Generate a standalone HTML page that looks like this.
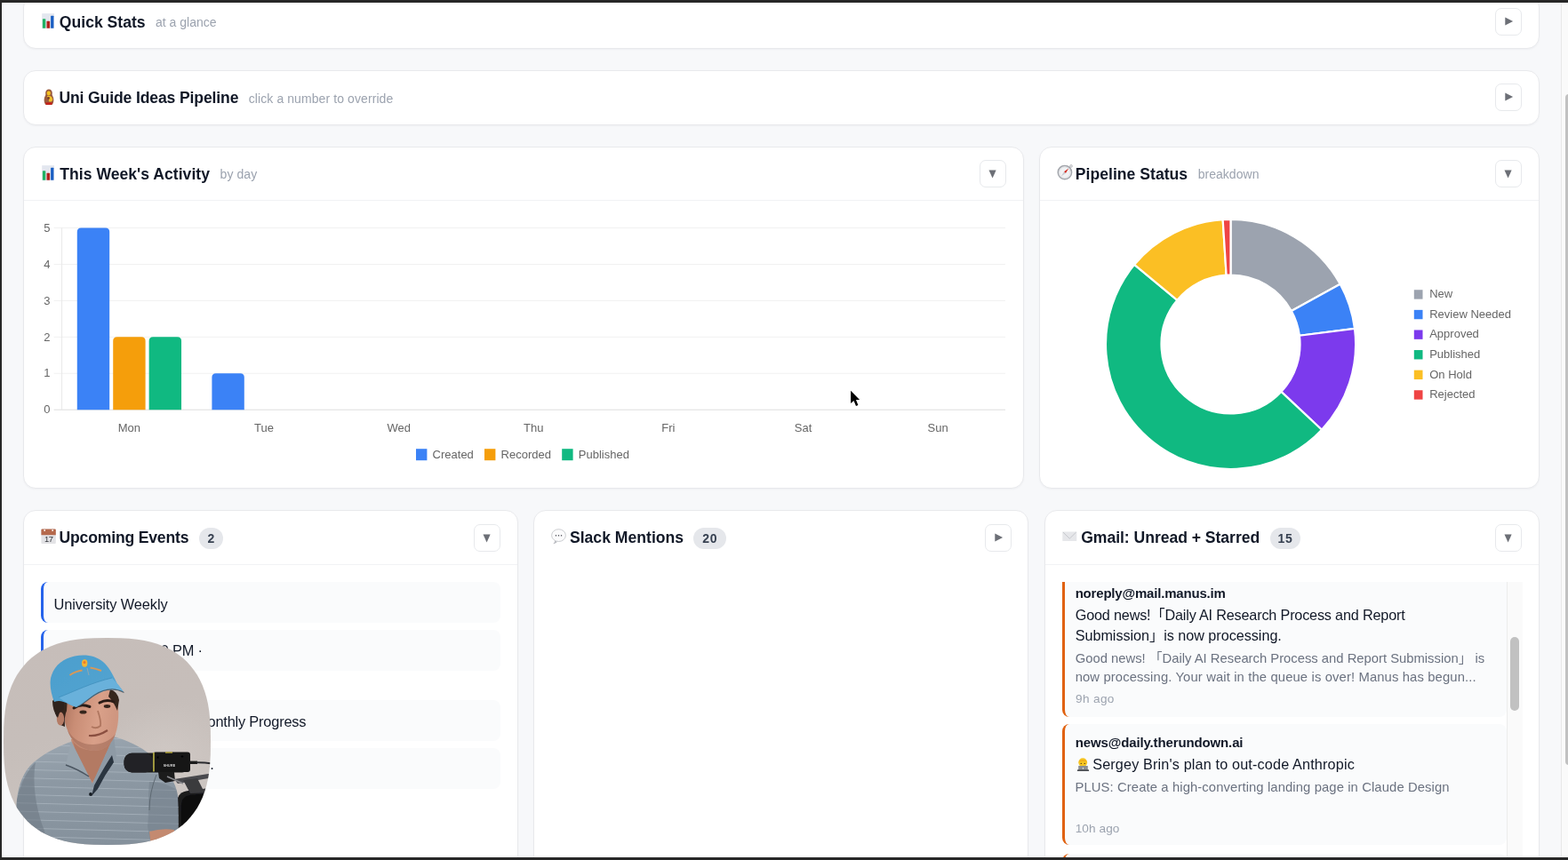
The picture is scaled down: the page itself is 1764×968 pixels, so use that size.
<!DOCTYPE html>
<html lang="en">
<head>
<meta charset="utf-8">
<title>Dashboard</title>
<style>
*{box-sizing:border-box}
html,body{margin:0;padding:0}
body{width:1764px;height:968px;overflow:hidden;position:relative;background:#f7f8fa;font-family:"Liberation Sans","Noto Sans CJK JP",sans-serif;color:#111827}
#app{position:absolute;left:0;top:0;width:1764px;height:968px;overflow:hidden;will-change:transform}
.frame-t,.frame-l,.frame-b{position:absolute;background:#272727;z-index:50}
.frame-t{left:0;top:0;width:1764px;height:3px}
.frame-l{left:0;top:0;width:2px;height:968px}
.frame-b{left:0;top:965px;width:1764px;height:3px}
.card{position:absolute;background:#fff;border:1px solid #e8e9ec;border-radius:14px;box-shadow:0 1px 2px rgba(16,24,40,.04)}
.hr{position:absolute;height:1px;background:#f1f2f5}
.btn{position:absolute;width:30px;height:31px;border:1px solid #e7e9ec;border-radius:7px;background:#fff}
.btn i{position:absolute;font-style:normal;font-family:"DejaVu Sans",sans-serif;color:#6c6f76;line-height:1;white-space:nowrap}
.btn .r{left:10.2px;top:8.3px;font-size:11.5px}
.btn .d{left:9.3px;top:8.7px;font-size:11.8px;transform:scaleX(0.9);transform-origin:50% 0}
.t{position:absolute;white-space:nowrap;line-height:1;display:block;margin:0;padding:0;font-weight:400}
.badge{position:absolute;background:#e5e7eb;border-radius:12.2px;height:24.3px}
.ev{position:absolute;width:517px;height:46px;background:#fafbfc;border-left:3px solid #2563eb;border-radius:8px}
.mailwrap{position:absolute;width:518px;height:313px;overflow:hidden}
.mail{position:absolute;left:0;width:500px;background:#fafbfc;border-left:3.5px solid #e0610f;border-radius:8px}
.strack{position:absolute;background:#fafafa}
.sthumb{position:absolute;background:#c1c1c1}
.ico{position:absolute;display:block}
svg text{font-family:"Liberation Sans",sans-serif}
</style>
</head>
<body>
<div id="app">
<div class="frame-t"></div><div class="frame-l"></div><div class="frame-b"></div>
<section class="card quick-stats" style="left:26px;top:-6px;width:1706px;height:61px">
<svg class="ico" style="left:20px;top:20.4px" width="15" height="18" viewBox="0 0 15 18"><rect x="0.2" y="0.2" width="13.8" height="17" fill="#e3e7ef"/><rect x="0.9" y="6.2" width="3.4" height="10.6" rx="0.6" fill="#1fb264"/><rect x="5.5" y="8.8" width="3.6" height="8" rx="0.6" fill="#b3221f"/><rect x="10.1" y="2.7" width="3.3" height="14.1" rx="0.5" fill="#1a5fc4"/></svg>
<h2 class="t" style="left:39.85px;top:21.50px;font-size:17.6px;font-weight:700;letter-spacing:-0.01px;color:#111827">Quick Stats</h2>
<span class="t" style="left:147.94px;top:23.00px;font-size:14px;letter-spacing:0.02px;color:#9ca3af">at a glance</span>
<div class="btn" style="left:1655px;top:14px"><i class="r">&#9654;</i></div>
</section>
<section class="card ideas-pipeline" style="left:26px;top:79px;width:1706px;height:62px">
<svg class="ico" style="left:21.7px;top:20px" width="12" height="19" viewBox="0 0 12 19"><path d="M6 0.4C3.6 0.4 2.2 2.2 2.2 4.4C2.2 5.8 2.6 6.6 1.9 7.8C1 9.3 0.6 10.8 0.6 12.4C0.6 15.2 1.6 17.2 2.6 18H9.4C10.4 17.2 11.4 15.2 11.4 12.4C11.4 10.8 11 9.3 10.1 7.8C9.4 6.6 9.8 5.8 9.8 4.4C9.8 2.2 8.4 0.4 6 0.4Z" fill="#9a5b3e"/><rect x="3.8" y="2.6" width="4" height="4.6" rx="1.6" fill="#f4c21f"/><path d="M4 8.2C6.5 7 9.8 8.6 10.2 11.5C10.4 13.4 9 14.8 6.4 14.6C5.2 13 6.6 11.4 5.6 10.4C5 9.8 4 9.2 4 8.2Z" fill="#f0bf2a"/><circle cx="5.6" cy="10.4" r="1.3" fill="#7a3b22"/><path d="M2.1 15.2H9.9C9.7 16.6 9.2 17.6 8.8 18H3.2C2.8 17.6 2.3 16.6 2.1 15.2Z" fill="#c3231c"/></svg>
<h2 class="t" style="left:39.42px;top:22.20px;font-size:17.6px;font-weight:700;letter-spacing:-0.14px;color:#111827">Uni Guide Ideas Pipeline</h2>
<span class="t" style="left:252.74px;top:23.90px;font-size:14px;letter-spacing:0.09px;color:#9ca3af">click a number to override</span>
<div class="btn" style="left:1655px;top:14px"><i class="r">&#9654;</i></div>
</section>
<section class="card week-activity" style="left:26px;top:165px;width:1126px;height:385px">
<svg class="ico" style="left:20px;top:20px" width="15" height="18" viewBox="0 0 15 18"><rect x="0.2" y="0.2" width="13.8" height="17" fill="#e3e7ef"/><rect x="0.9" y="6.2" width="3.4" height="10.6" rx="0.6" fill="#1fb264"/><rect x="5.5" y="8.8" width="3.6" height="8" rx="0.6" fill="#b3221f"/><rect x="10.1" y="2.7" width="3.3" height="14.1" rx="0.5" fill="#1a5fc4"/></svg>
<h2 class="t" style="left:40.31px;top:21.70px;font-size:17.6px;font-weight:700;letter-spacing:0.01px;color:#111827">This Week's Activity</h2>
<span class="t" style="left:220.59px;top:23.00px;font-size:14px;letter-spacing:0.08px;color:#9ca3af">by day</span>
<div class="btn" style="left:1075px;top:14px"><i class="d">&#9660;</i></div>
<div class="hr" style="left:0px;top:59px;width:1124px"></div>
<svg class="ico" style="left:0px;top:60px" width="1124" height="323" viewBox="27 226 1124 323"><rect x="60.6" y="460.70" width="1070.4" height="1" fill="#dddddd"/><rect x="60.6" y="419.76" width="1070.4" height="1" fill="#f1f1f1"/><rect x="60.6" y="378.82" width="1070.4" height="1" fill="#f1f1f1"/><rect x="60.6" y="337.88" width="1070.4" height="1" fill="#f1f1f1"/><rect x="60.6" y="296.94" width="1070.4" height="1" fill="#f1f1f1"/><rect x="60.6" y="256.00" width="1070.4" height="1" fill="#f1f1f1"/><rect x="69.10" y="256.50" width="1" height="204.70" fill="#e8e8e8"/><path d="M86.78 461.20V261.00Q86.78 256.50 91.28 256.50H118.68Q123.18 256.50 123.18 261.00V461.20Z" fill="#3b82f6"/><path d="M127.22 461.20V383.82Q127.22 379.32 131.72 379.32H159.11Q163.61 379.32 163.61 383.82V461.20Z" fill="#f59e0b"/><path d="M167.65 461.20V383.82Q167.65 379.32 172.15 379.32H199.54Q204.04 379.32 204.04 383.82V461.20Z" fill="#10b981"/><path d="M238.41 461.20V424.76Q238.41 420.26 242.91 420.26H270.30Q274.80 420.26 274.80 424.76V461.20Z" fill="#3b82f6"/><text x="56.6" y="465.40" font-size="13" fill="#666" text-anchor="end">0</text><text x="56.6" y="424.46" font-size="13" fill="#666" text-anchor="end">1</text><text x="56.6" y="383.52" font-size="13" fill="#666" text-anchor="end">2</text><text x="56.6" y="342.58" font-size="13" fill="#666" text-anchor="end">3</text><text x="56.6" y="301.64" font-size="13" fill="#666" text-anchor="end">4</text><text x="56.6" y="260.70" font-size="13" fill="#666" text-anchor="end">5</text><text x="145.41" y="486.3" font-size="13" fill="#666" text-anchor="middle">Mon</text><text x="297.04" y="486.3" font-size="13" fill="#666" text-anchor="middle">Tue</text><text x="448.67" y="486.3" font-size="13" fill="#666" text-anchor="middle">Wed</text><text x="600.30" y="486.3" font-size="13" fill="#666" text-anchor="middle">Thu</text><text x="751.93" y="486.3" font-size="13" fill="#666" text-anchor="middle">Fri</text><text x="903.56" y="486.3" font-size="13" fill="#666" text-anchor="middle">Sat</text><text x="1055.19" y="486.3" font-size="13" fill="#666" text-anchor="middle">Sun</text><rect x="468.0" y="505.2" width="12.4" height="13" fill="#3b82f6"/><text x="486.6" y="516.1" font-size="13" fill="#666">Created</text><rect x="545.0" y="505.2" width="12.4" height="13" fill="#f59e0b"/><text x="563.6" y="516.1" font-size="13" fill="#666">Recorded</text><rect x="632.2" y="505.2" width="12.4" height="13" fill="#10b981"/><text x="650.8" y="516.1" font-size="13" fill="#666">Published</text></svg>
</section>
<section class="card pipeline-status" style="left:1169px;top:165px;width:563px;height:385px">
<svg class="ico" style="left:18.6px;top:18.4px" width="19" height="19" viewBox="0 0 19 19"><circle cx="16" cy="2.9" r="1.5" fill="#d9dadd" stroke="#b4b6bb" stroke-width="0.6"/><circle cx="8.9" cy="10.1" r="7.7" fill="#f1f2f4" stroke="#a3a6ac" stroke-width="1.5"/><circle cx="8.9" cy="10.1" r="6.2" fill="none" stroke="#d5d7db" stroke-width="0.7"/><path d="M13.2 5.6L9.9 11L8 9.2Z" fill="#d2281e"/><path d="M4.8 14.6L8 9.2L9.9 11Z" fill="#c9cbd0"/></svg>
<h2 class="t" style="left:39.75px;top:21.70px;font-size:17.6px;font-weight:700;letter-spacing:0.02px;color:#111827">Pipeline Status</h2>
<span class="t" style="left:177.69px;top:23.00px;font-size:14px;letter-spacing:0.03px;color:#9ca3af">breakdown</span>
<div class="btn" style="left:512px;top:14px"><i class="d">&#9660;</i></div>
<div class="hr" style="left:0px;top:59px;width:561px"></div>
<svg class="ico" style="left:-1px;top:60px" width="563" height="322" viewBox="1169 226 563 322"><path d="M1384.50 246.90A140.6 140.6 0 0 1 1507.71 319.77L1452.85 349.92A78.0 78.0 0 0 0 1384.50 309.50Z" fill="#9ca3af" stroke="#fff" stroke-width="2.2" stroke-linejoin="round"/><path d="M1507.71 319.77A140.6 140.6 0 0 1 1523.99 369.88L1461.88 377.72A78.0 78.0 0 0 0 1452.85 349.92Z" fill="#3b82f6" stroke="#fff" stroke-width="2.2" stroke-linejoin="round"/><path d="M1523.99 369.88A140.6 140.6 0 0 1 1486.99 483.75L1441.36 440.89A78.0 78.0 0 0 0 1461.88 377.72Z" fill="#7c3aed" stroke="#fff" stroke-width="2.2" stroke-linejoin="round"/><path d="M1486.99 483.75A140.6 140.6 0 0 1 1276.17 297.88L1324.40 337.78A78.0 78.0 0 0 0 1441.36 440.89Z" fill="#10b981" stroke="#fff" stroke-width="2.2" stroke-linejoin="round"/><path d="M1276.17 297.88A140.6 140.6 0 0 1 1375.67 247.18L1379.60 309.65A78.0 78.0 0 0 0 1324.40 337.78Z" fill="#fbbf24" stroke="#fff" stroke-width="2.2" stroke-linejoin="round"/><path d="M1375.67 247.18A140.6 140.6 0 0 1 1384.50 246.90L1384.50 309.50A78.0 78.0 0 0 0 1379.60 309.65Z" fill="#ef4444" stroke="#fff" stroke-width="2.2" stroke-linejoin="round"/><rect x="1590.8" y="326.25" width="9.7" height="10.4" fill="#9ca3af"/><text x="1608.2" y="335.25" font-size="13" fill="#666">New</text><rect x="1590.8" y="348.85" width="9.7" height="10.4" fill="#3b82f6"/><text x="1608.2" y="357.85" font-size="13" fill="#666">Review Needed</text><rect x="1590.8" y="371.45" width="9.7" height="10.4" fill="#7c3aed"/><text x="1608.2" y="380.45" font-size="13" fill="#666">Approved</text><rect x="1590.8" y="394.05" width="9.7" height="10.4" fill="#10b981"/><text x="1608.2" y="403.05" font-size="13" fill="#666">Published</text><rect x="1590.8" y="416.65" width="9.7" height="10.4" fill="#fbbf24"/><text x="1608.2" y="425.65" font-size="13" fill="#666">On Hold</text><rect x="1590.8" y="439.25" width="9.7" height="10.4" fill="#ef4444"/><text x="1608.2" y="448.25" font-size="13" fill="#666">Rejected</text></svg>
</section>
<section class="card upcoming-events" style="left:26px;top:574px;width:557px;height:420px">
<svg class="ico" style="left:18.5px;top:20px" width="18" height="18" viewBox="0 0 18 18"><rect x="0.4" y="0.4" width="16.4" height="16.6" rx="1" fill="#e3e3e6"/><path d="M0.4 1.4Q0.4 0.4 1.4 0.4H15.8Q16.8 0.4 16.8 1.4V7.2H0.4Z" fill="#b5694c"/><rect x="3.4" y="1" width="1.6" height="2" fill="#f2e4dc"/><rect x="12.4" y="1" width="1.6" height="2" fill="#f2e4dc"/><text x="8.7" y="15.4" font-size="9.4" text-anchor="middle" fill="#33363c" letter-spacing="-0.4">17</text></svg>
<h2 class="t" style="left:39.52px;top:22.00px;font-size:17.6px;font-weight:700;letter-spacing:-0.19px;color:#111827">Upcoming Events</h2>
<span class="badge" style="left:197px;top:18.8px;width:27.3px"></span>
<strong class="t" style="left:206.49px;top:23.85px;font-size:14px;font-weight:700;color:#374151">2</strong>
<div class="btn" style="left:506px;top:15px"><i class="d">&#9660;</i></div>
<div class="hr" style="left:0px;top:60px;width:555px"></div>
<div class="ev" style="left:19px;top:80px"></div>
<div class="ev" style="left:19px;top:134px"></div>
<div class="ev" style="left:19px;top:213px"></div>
<div class="ev" style="left:19px;top:267px"></div>
<p class="t" style="left:33.47px;top:96.80px;font-size:16.4px;letter-spacing:-0.11px;color:#111827">University Weekly</p>
<p class="t" style="left:84.42px;top:148.80px;font-size:16.4px;letter-spacing:-0.20px;color:#111827">Today 3:00 PM ·</p>
<p class="t" style="left:117.58px;top:228.70px;font-size:16.4px;letter-spacing:-0.20px;color:#111827">Uni Guide Monthly Progress</p>
<p class="t" style="left:32.26px;top:277.00px;font-size:16.4px;letter-spacing:-0.20px;color:#111827">Today 5:30 PM · Room 4.</p>
</section>
<section class="card slack-mentions" style="left:600px;top:574px;width:557px;height:420px">
<svg class="ico" style="left:18px;top:20px" width="19" height="19" viewBox="0 0 19 19"><path d="M3.2 17.2C4.6 16.2 5.2 15 5 13.6L8 14.8C6.6 16.2 5 17 3.2 17.2Z" fill="#b9bbc0"/><ellipse cx="9.5" cy="7.6" rx="7.9" ry="6.9" fill="#fbfbfc" stroke="#c5c7cb" stroke-width="0.9"/><rect x="5.8" y="6.9" width="1.3" height="1.7" rx="0.4" fill="#5b5d63"/><rect x="8.85" y="6.9" width="1.3" height="1.7" rx="0.4" fill="#5b5d63"/><rect x="11.9" y="6.9" width="1.3" height="1.7" rx="0.4" fill="#5b5d63"/></svg>
<h2 class="t" style="left:39.92px;top:22.00px;font-size:17.6px;font-weight:700;letter-spacing:0.01px;color:#111827">Slack Mentions</h2>
<span class="badge" style="left:179.4px;top:18.8px;width:36.3px"></span>
<strong class="t" style="left:189.29px;top:23.85px;font-size:14px;font-weight:700;letter-spacing:0.71px;color:#374151">20</strong>
<div class="btn" style="left:507px;top:15px"><i class="r">&#9654;</i></div>
</section>
<section class="card gmail" style="left:1175px;top:574px;width:557px;height:420px">
<svg class="ico" style="left:19px;top:23.3px" width="17" height="12" viewBox="0 0 17 12"><rect x="0.3" y="0.6" width="16" height="10.4" rx="0.6" fill="#e6e7ea"/><path d="M0.9 1L8.3 8.2L15.7 1" fill="none" stroke="#c2c4c9" stroke-width="0.9"/></svg>
<h2 class="t" style="left:40.17px;top:22.00px;font-size:17.6px;font-weight:700;letter-spacing:-0.04px;color:#111827">Gmail: Unread + Starred</h2>
<span class="badge" style="left:253px;top:18.8px;width:33.8px"></span>
<strong class="t" style="left:261.52px;top:23.85px;font-size:14px;font-weight:700;letter-spacing:0.68px;color:#374151">15</strong>
<div class="btn" style="left:506px;top:15px"><i class="d">&#9660;</i></div>
<div class="hr" style="left:0px;top:60px;width:555px"></div>
<div class="mailwrap" style="left:19px;top:80px">
<article class="mail" style="top:-7.5px;height:159.5px"></article>
<article class="mail" style="top:160.3px;height:136px"></article>
<article class="mail" style="top:305.8px;height:136px"></article>
<strong class="t" style="left:14.65px;top:5.20px;font-size:15px;font-weight:700;letter-spacing:-0.19px;color:#111827">noreply@mail.manus.im</strong>
<p class="t" style="left:14.72px;top:29.00px;font-size:16.2px;letter-spacing:-0.17px;color:#111827">Good news!「Daily AI Research Process and Report</p>
<p class="t" style="left:14.68px;top:52.40px;font-size:16.2px;letter-spacing:-0.03px;color:#111827">Submission」is now processing.</p>
<p class="t" style="left:14.70px;top:78.70px;font-size:14.8px;color:#6b7280">Good news! 「Daily AI Research Process and Report Submission」 is</p>
<p class="t" style="left:14.64px;top:100.00px;font-size:14.8px;letter-spacing:0.13px;color:#6b7280">now processing. Your wait in the queue is over! Manus has begun...</p>
<span class="t" style="left:15.08px;top:125.40px;font-size:13.6px;letter-spacing:0.34px;color:#9ca3af">9h ago</span>
<strong class="t" style="left:14.65px;top:173.30px;font-size:15px;font-weight:700;letter-spacing:-0.13px;color:#111827">news@daily.therundown.ai</strong>
<svg class="ico" style="left:16px;top:197.9px" width="15" height="16" viewBox="0 0 15 16"><circle cx="7.2" cy="5.2" r="4.9" fill="#f6c623"/><path d="M2.6 4.4C3.6 1.6 10.8 1.6 11.8 4.4C10 3.4 4.4 3.4 2.6 4.4Z" fill="#f0a818"/><circle cx="5.3" cy="6.4" r="0.7" fill="#5b3a1c"/><circle cx="9.3" cy="6.4" r="0.7" fill="#5b3a1c"/><rect x="2.2" y="9" width="10.6" height="5" fill="#8b8e93"/><rect x="6.9" y="11" width="1.1" height="1.6" fill="#e6e7ea"/><path d="M1.2 13.2H13.8L14.2 14.9H0.8Z" fill="#4d5055"/></svg>
<p class="t" style="left:34.18px;top:197.30px;font-size:16.2px;letter-spacing:0.16px;color:#111827">Sergey Brin's plan to out-code Anthropic</p>
<p class="t" style="left:14.51px;top:223.60px;font-size:14.8px;letter-spacing:0.11px;color:#6b7280">PLUS: Create a high-converting landing page in Claude Design</p>
<span class="t" style="left:14.64px;top:270.70px;font-size:13.6px;letter-spacing:0.11px;color:#9ca3af">10h ago</span>
<div class="strack" style="left:500px;top:0;width:18px;height:313px;border-left:1px solid #ececec"></div>
<div class="sthumb" style="left:504.3px;top:62.2px;width:9.6px;height:82.4px;border-radius:5px"></div>
</div>
</section>
<div class="strack" style="left:1756px;top:3px;width:8px;height:962px;border-left:1px solid #e8e8e8"></div>
<div class="sthumb" style="left:1761px;top:105.5px;width:8px;height:755px;border-radius:4px"></div>
<svg class="ico cursor" style="left:950px;top:434px;z-index:30" width="24" height="28" viewBox="950 434 24 28"><path d="M957.1 439.7V454L960.5 450.9L963 457L965.4 456L963 450H967.1Z" fill="#000" stroke="#fff" stroke-width="1.8" stroke-linejoin="round" paint-order="stroke"/></svg>
<div class="cam" style="position:absolute;left:4px;top:718px;width:233px;height:233px;z-index:20"><svg width="233" height="233" viewBox="4 718 233 233" style="display:block"><defs><clipPath id="sq"><path d="M237.0 834.5L236.8 849.4L236.2 859.6L235.3 868.4L234.0 876.5L232.3 884.0L230.2 890.9L227.8 897.4L225.0 903.5L221.9 909.3L218.3 914.6L214.4 919.6L210.2 924.2L205.6 928.4L200.6 932.3L195.3 935.9L189.5 939.0L183.4 941.8L176.9 944.2L170.0 946.3L162.5 948.0L154.4 949.3L145.6 950.2L135.4 950.8L120.5 951.0L105.6 950.8L95.4 950.2L86.6 949.3L78.5 948.0L71.0 946.3L64.1 944.2L57.6 941.8L51.5 939.0L45.7 935.9L40.4 932.3L35.4 928.4L30.8 924.2L26.6 919.6L22.7 914.6L19.1 909.3L16.0 903.5L13.2 897.4L10.8 890.9L8.7 884.0L7.0 876.5L5.7 868.4L4.8 859.6L4.2 849.4L4.0 834.5L4.2 819.6L4.8 809.4L5.7 800.6L7.0 792.5L8.7 785.0L10.8 778.1L13.2 771.6L16.0 765.5L19.1 759.7L22.7 754.4L26.6 749.4L30.8 744.8L35.4 740.6L40.4 736.7L45.7 733.1L51.5 730.0L57.6 727.2L64.1 724.8L71.0 722.7L78.5 721.0L86.6 719.7L95.4 718.8L105.6 718.2L120.5 718.0L135.4 718.2L145.6 718.8L154.4 719.7L162.5 721.0L170.0 722.7L176.9 724.8L183.4 727.2L189.5 730.0L195.3 733.1L200.6 736.7L205.6 740.6L210.2 744.8L214.4 749.4L218.3 754.4L221.9 759.7L225.0 765.5L227.8 771.6L230.2 778.1L232.3 785.0L234.0 792.5L235.3 800.6L236.2 809.4L236.8 819.6Z"/></clipPath><linearGradient id="wall" x1="0" y1="0" x2="0.3" y2="1"><stop offset="0" stop-color="#c6bdb9"/><stop offset="0.5" stop-color="#c6beba"/><stop offset="1" stop-color="#cbc4c0"/></linearGradient><radialGradient id="wallglow" cx="0.78" cy="0.6" r="0.3"><stop offset="0" stop-color="#d2cbc7" stop-opacity="0.8"/><stop offset="1" stop-color="#d0c9c5" stop-opacity="0"/></radialGradient><linearGradient id="skin" x1="0" y1="0" x2="1" y2="0.2"><stop offset="0" stop-color="#a8705b"/><stop offset="0.3" stop-color="#c98d75"/><stop offset="0.7" stop-color="#d9a089"/><stop offset="1" stop-color="#cf9680"/></linearGradient><linearGradient id="shirt" x1="0.3" y1="0" x2="0.5" y2="1"><stop offset="0" stop-color="#9ba6b0"/><stop offset="0.4" stop-color="#8c98a3"/><stop offset="1" stop-color="#85919c"/></linearGradient><linearGradient id="cap" x1="0" y1="0" x2="1" y2="1"><stop offset="0" stop-color="#4b9ecd"/><stop offset="1" stop-color="#55a5d1"/></linearGradient><pattern id="stripes" width="40" height="9.4" patternUnits="userSpaceOnUse" patternTransform="rotate(1.5)"><rect x="0" y="0" width="40" height="1" fill="#b3bdc6" opacity="0.6"/></pattern><clipPath id="shirtclip"><path d="M80 835C70 838 52 846 38 858C26 868 21 884 19 900C17 915 20 935 30 951H200C201 935 201 915 200 896C198 880 188 866 170 850C158 840 142 833 128 829L104 882Z"/></clipPath><filter id="soft" x="-5%" y="-5%" width="110%" height="110%"><feGaussianBlur stdDeviation="0.55"/></filter></defs><g clip-path="url(#sq)"><rect x="4" y="718" width="233" height="233" fill="url(#wall)"/><rect x="4" y="718" width="233" height="233" fill="url(#wallglow)"/><g filter="url(#soft)"><path d="M198 953L199 903Q200 891 212 890L240 888V953Z" fill="#1a1a1d"/><path d="M203 953L204 905Q205 896 214 895L240 893V953Z" fill="#0b0b0d"/><path d="M80 832L128 826L126 852L104 884L84 856Z" fill="#c48a72"/><path d="M82 834C92 848 112 848 127 832L120 856L104 880L88 858Z" fill="#a8705c" opacity="0.6"/><path d="M80 835C70 838 52 846 38 858C26 868 21 884 19 900C17 915 20 935 30 951H200C201 935 201 915 200 896C198 880 188 866 170 850C158 840 142 833 128 829L104 882Z" fill="url(#shirt)"/><g clip-path="url(#shirtclip)"><rect x="4" y="830" width="233" height="125" fill="url(#stripes)"/><path d="M19 900C24 880 30 868 40 858C36 880 40 910 50 935L52 951H28C20 935 17 915 19 900Z" fill="#6b7782" opacity="0.55"/><path d="M168 880C166 900 168 915 166 930L170 951H200V890C192 884 180 880 168 880Z" fill="#727e89" opacity="0.5"/></g><path d="M80 834L74 861Q88 866 100 874L104 882Z" fill="#99a5af"/><path d="M74 861Q88 866 100 874" fill="none" stroke="#4b5560" stroke-width="1.4"/><path d="M128 829L131 852Q122 862 112 884L104 882Z" fill="#8e9aa5"/><path d="M126 850Q118 862 106 884L103 896L110 888Q118 872 128 858Z" fill="#2c3440"/><circle cx="102" cy="894" r="1.9" fill="#151a22"/><path d="M168 936Q182 932 196 934L197 953H170Z" fill="#c48a70"/><path d="M72 790C70 800 72 812 76 822C80 834 90 843 104 845C116 846 126 838 130 826C134 814 134 800 132 788C128 778 118 772 104 772C90 772 76 778 72 790Z" fill="url(#skin)"/><path d="M76 822C80 834 90 843 104 845C116 846 126 838 130 826C124 834 114 838 104 838C92 838 82 832 76 822Z" fill="#9c6855" opacity="0.55"/><path d="M60 786Q66 780 76 784L75 800Q72 806 73 818L68 816Q60 802 60 786Z" fill="#35251f"/><ellipse cx="68" cy="809" rx="4.2" ry="7.5" fill="#b57c66"/><path d="M59 789Q64 783 72 786L72 798Q67 800 65 808Q59 800 59 789Z" fill="#2f211c"/><path d="M124 776Q132 778 134 788L132 800Q128 790 122 784Z" fill="#35251f"/><path d="M83 797Q91 791.5 101 795.5" stroke="#2a1d19" stroke-width="3" fill="none" stroke-linecap="round"/><path d="M112 791Q120 786.5 128 790" stroke="#2a1d19" stroke-width="3" fill="none" stroke-linecap="round"/><ellipse cx="93.5" cy="801.5" rx="4" ry="2" fill="#36251f"/><ellipse cx="120.5" cy="795" rx="3.8" ry="1.9" fill="#36251f"/><path d="M110 800Q114 812 113 817Q108 821 103 818" stroke="#a56b55" stroke-width="1.8" fill="none" opacity="0.8"/><path d="M100 828Q110 829 121 822" stroke="#8a4f40" stroke-width="2.2" fill="none"/><path d="M61 790C57 780 55 768 58 760C62 748 72 741 84 738.5C96 736 108 738 116 745C124 752 128 762 132 770L139 779C128 774 118 776 108 782C98 788 92 794 86 796C78 794 70 786 61 790Z" fill="url(#cap)"/><path d="M66 785C84 778 104 768 126 763C131 768 136 774 139.5 779.5C128 773.5 116 776 106 782.5C98 788 92 794 86.5 795.8C80 795 72 789 66 785Z" fill="#69b1db"/><path d="M66 785C84 778 104 768 126 763" stroke="#3f8fbd" stroke-width="0.8" fill="none"/><path d="M86.5 795.8C92 794 98 788 106 782.5C116 776 128 773.5 139.5 779.5" stroke="#2d2522" stroke-width="1.2" fill="none" opacity="0.55"/><ellipse cx="95.2" cy="746.5" rx="3.2" ry="4.2" fill="#f3b431"/><circle cx="95" cy="745.4" r="1.5" fill="#ee772a"/><path d="M78.5 760Q85 755.5 92.5 754.5" stroke="#d79858" stroke-width="2" fill="none"/><path d="M101.5 751.5Q108 752.5 114 755" stroke="#d79858" stroke-width="2" fill="none"/><path d="M98 752L100 760" stroke="#9aa7ad" stroke-width="0.9"/><path d="M196 877L240 870V875L200 882Z" fill="#4a4a4e"/><path d="M206 878L222 876L228 888L240 886V892L214 893Z" fill="#3a3a3e"/><path d="M178 869H196L197 879L186 881L179 876Z" fill="#1b1b1e"/><path d="M188 874L206 882" stroke="#8a8a8e" stroke-width="1.6"/><path d="M176 872Q168 892 168 912" stroke="#5e6972" stroke-width="1" fill="none"/><rect x="139.5" y="847.5" width="74.5" height="22" rx="9" fill="#1a1a1c"/><rect x="172" y="846.5" width="42" height="22.5" rx="3" fill="#141416"/><rect x="139.5" y="848" width="33" height="21.5" rx="9" fill="#232325"/><rect x="172.2" y="847" width="1.5" height="21.5" fill="#c9c04a"/><rect x="186" y="846.4" width="8" height="1.2" fill="#d6c640"/><circle cx="177.5" cy="852.5" r="1.2" fill="#050505"/><circle cx="205" cy="851.5" r="1.2" fill="#050505"/><path d="M213 858.3H222" stroke="#1c1c1f" stroke-width="3.4" fill="none"/><path d="M221 858.3Q230 858.2 240 859.6" stroke="#2a2a2d" stroke-width="2" fill="none"/></g><text x="190.5" y="862.9" font-size="3.6" font-weight="700" text-anchor="middle" fill="#d8d8d8" letter-spacing="0.2">SHURE</text></g></svg></div>
</div>
</body>
</html>
